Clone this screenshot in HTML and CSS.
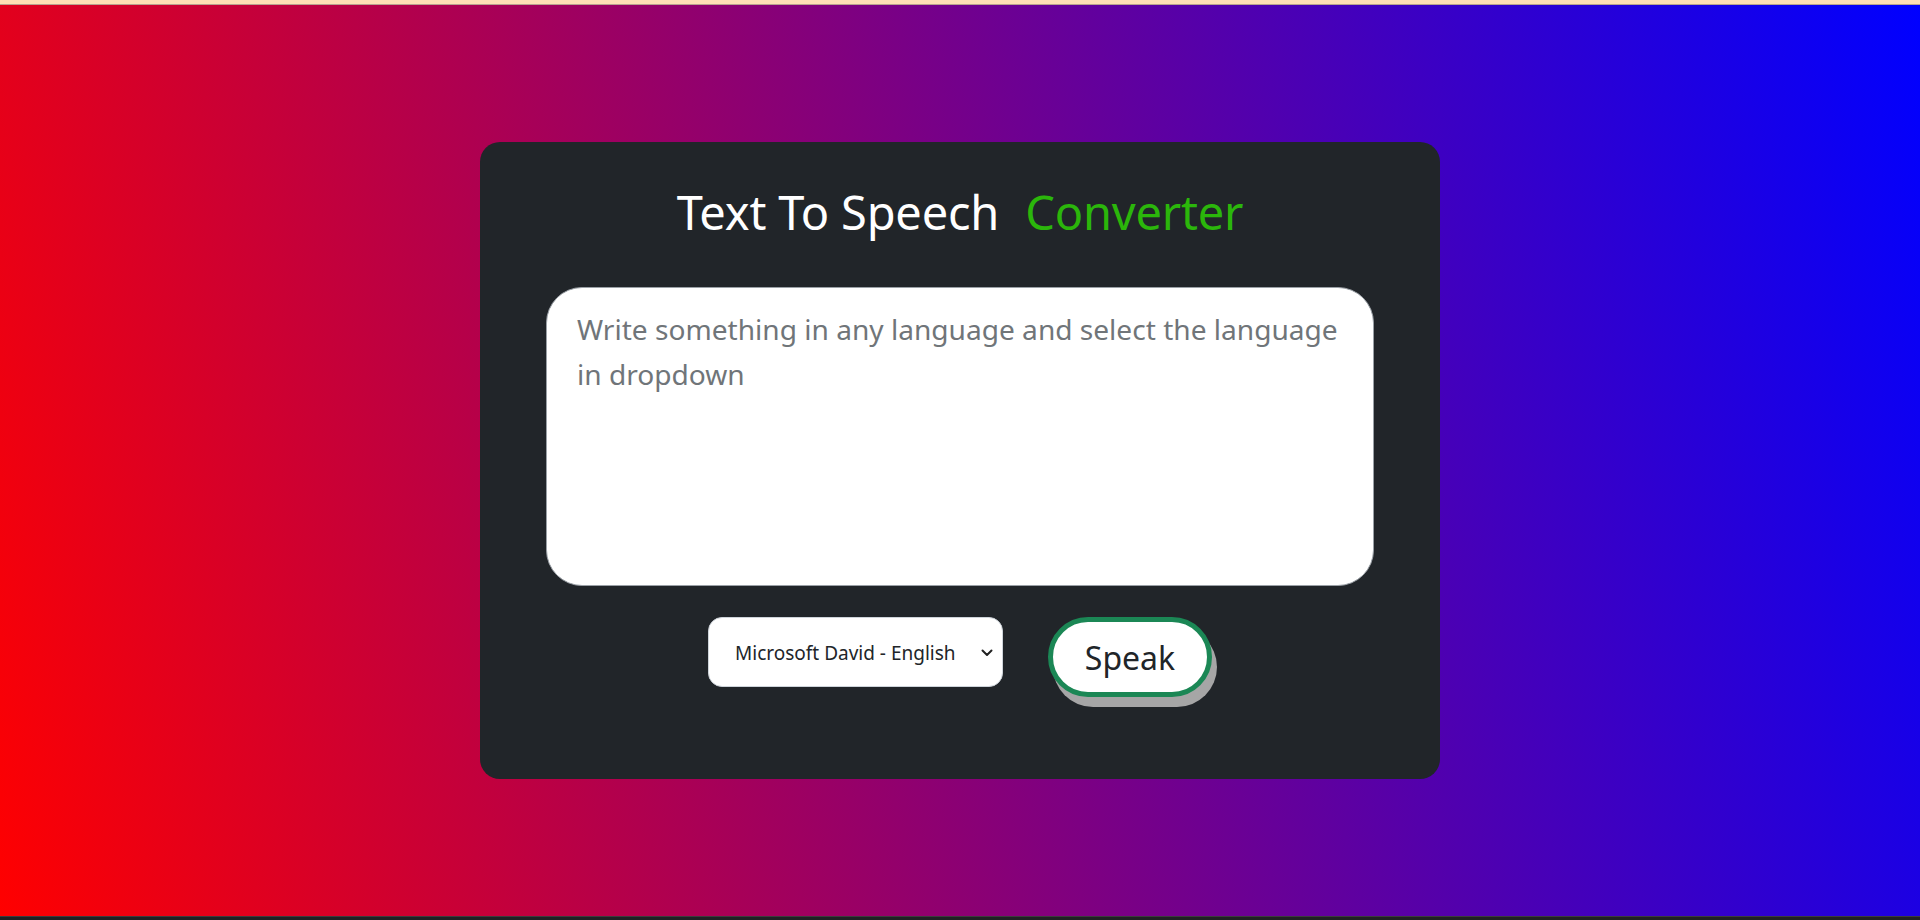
FILE: index.html
```html
<!DOCTYPE html>
<html lang="en">
<head>
<meta charset="utf-8">
<title>Text To Speech Converter</title>
<link rel="stylesheet" href="styles.css">
</head>
<body>
<div class="topbar"></div>
<main class="stage">
  <section class="card">
    <h1 class="title">Text To Speech <span class="accent">Converter</span></h1>
    <textarea class="input" placeholder="Write something in any language and select the language&#10;in dropdown"></textarea>
    <div class="controls">
      <div class="select-wrap">
        <select class="voice">
          <option>Microsoft David - English</option>
        </select>
        <svg class="chevron" width="12" height="8" viewBox="0 0 12 8"><path d="M1.5 1.5 L6 6 L10.5 1.5" fill="none" stroke="#222" stroke-width="2" stroke-linecap="round" stroke-linejoin="round"/></svg>
      </div>
      <button class="speak">Speak</button>
    </div>
  </section>
</main>
<div class="bottombar"></div>
</body>
</html>
```
FILE: styles.css
```css
html, body {
  margin: 0;
  padding: 0;
  height: 100%;
}
body {
  display: flex;
  flex-direction: column;
  font-family: "Noto Sans", "Open Sans", sans-serif;
  overflow: hidden;
}
.topbar {
  height: 4px;
  background: #ffdfb6;
  border-bottom: 1px solid #b8a38f;
  flex: none;
}
.bottombar {
  height: 3px;
  background: #202124;
  border-top: 1px solid #3c3c3c;
  flex: none;
}
.stage {
  flex: 1;
  display: flex;
  align-items: center;
  justify-content: center;
  background: linear-gradient(75deg, #ff0000, #0000ff);
}
.card {
  width: 960px;
  height: 637px;
  box-sizing: border-box;
  background: #212529;
  border-radius: 20px;
  padding-top: 40px;
  display: flex;
  flex-direction: column;
  align-items: center;
}
.title {
  margin: 0;
  font-size: 47px;
  line-height: 60px;
  font-weight: 400;
  color: #ffffff;
  letter-spacing: -0.2px;
}
.accent {
  color: #2bb60b;
  margin-left: 14px;
}
.input {
  margin-top: 45px;
  width: 828px;
  height: 299px;
  box-sizing: border-box;
  border: 1px solid #9aa0a6;
  border-radius: 36px;
  padding: 19px 8px 19px 30px;
  font-family: inherit;
  font-size: 28.1px;
  line-height: 45px;
  resize: none;
  background: #fff;
  color: #212529;
  outline: none;
}
.input::placeholder {
  color: #707579;
}
.controls {
  margin-top: 31px;
  display: flex;
  align-items: flex-start;
  gap: 45px;
}
.select-wrap {
  position: relative;
  display: flex;
}
.voice {
  appearance: none;
  -webkit-appearance: none;
  width: 295px;
  height: 70px;
  box-sizing: border-box;
  border: 1px solid #ced4da;
  border-radius: 14px;
  background: #fff;
  color: #212529;
  font-family: inherit;
  font-size: 19px;
  padding: 2px 40px 0 26px;
}
.chevron {
  position: absolute;
  right: 10px;
  top: 32px;
}
.speak {
  width: 164px;
  height: 80px;
  box-sizing: border-box;
  border: 5px solid #1b8755;
  border-radius: 40px;
  background: #fff;
  color: #212529;
  font-family: inherit;
  font-size: 32px;
  padding: 0;
  box-shadow: 5px 10px 0 #a6a6a6;
}
```
